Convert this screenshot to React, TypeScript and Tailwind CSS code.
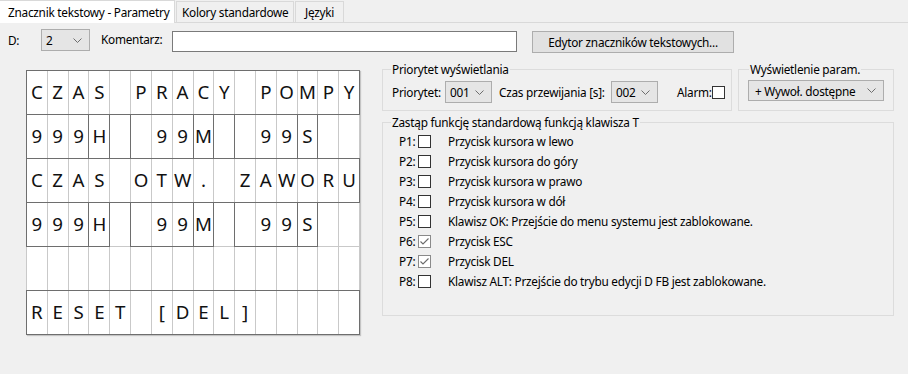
import React from "react";

const COLS = [
  "col-start-1", "col-start-2", "col-start-3", "col-start-4",
  "col-start-5", "col-start-6", "col-start-7", "col-start-8",
  "col-start-9", "col-start-10", "col-start-11", "col-start-12",
  "col-start-13", "col-start-14", "col-start-15", "col-start-16",
];

const TIME_GROUPS = [
  "col-start-1 col-span-3",
  "col-start-4 col-span-1",
  "col-start-6 col-span-3",
  "col-start-9 col-span-1",
  "col-start-11 col-span-3",
  "col-start-14 col-span-1",
];

const ROWS: { text: string; groups: string[] }[] = [
  { text: "CZAS PRACY POMPY", groups: ["col-start-1 col-span-16"] },
  { text: "999H  99M  99S  ", groups: TIME_GROUPS },
  { text: "CZAS OTW. ZAWORU", groups: ["col-start-1 col-span-16"] },
  { text: "999H  99M  99S  ", groups: TIME_GROUPS },
  { text: "                ", groups: [] },
  { text: "RESET [DEL]     ", groups: ["col-start-1 col-span-16"] },
];

const KEYS = [
  { id: "P1", label: "Przycisk kursora w lewo", checked: false },
  { id: "P2", label: "Przycisk kursora do góry", checked: false },
  { id: "P3", label: "Przycisk kursora w prawo", checked: false },
  { id: "P4", label: "Przycisk kursora w dół", checked: false },
  { id: "P5", label: "Klawisz OK: Przejście do menu systemu jest zablokowane.", checked: false },
  { id: "P6", label: "Przycisk ESC", checked: true },
  { id: "P7", label: "Przycisk DEL", checked: true },
  { id: "P8", label: "Klawisz ALT: Przejście do trybu edycji D FB jest zablokowane.", checked: false },
];

function Chevron() {
  return (
    <svg width="9" height="5" viewBox="0 0 9 5" className="shrink-0">
      <polyline points="0.5,0.5 4.5,4.5 8.5,0.5" fill="none" stroke="#6d6d6d" strokeWidth="1" />
    </svg>
  );
}

function Combo({ value, className = "" }: { value: string; className?: string }) {
  return (
    <div className={`flex items-center justify-between border border-[#adadad] bg-[#e5e5e5] pl-[4px] pr-[7px] ${className}`}>
      <span className="whitespace-nowrap">{value}</span>
      <Chevron />
    </div>
  );
}

function CheckBox({ checked = false }: { checked?: boolean }) {
  return (
    <div
      className={`flex h-[13px] w-[13px] shrink-0 items-center justify-center border bg-white ${
        checked ? "border-[#8a8a8a]" : "border-[#333333]"
      }`}
    >
      {checked && (
        <svg width="11" height="11" viewBox="0 0 11 11">
          <polyline points="1.5,5.5 4,8 9.5,2.5" fill="none" stroke="#6a6a6a" strokeWidth="1.1" />
        </svg>
      )}
    </div>
  );
}

function Tab({ label, active = false, className = "" }: { label: string; active?: boolean; className?: string }) {
  return (
    <div
      className={`flex items-center border-x border-t border-[#d9d9d9] whitespace-nowrap ${
        active ? "-mb-px h-[23px] bg-white" : "mt-px h-[21px] bg-[#f0f0f0]"
      } ${className}`}
    >
      {label}
    </div>
  );
}

function LcdGrid() {
  return (
    <div className="w-[334px] border-l border-t border-[#c9c9c9] bg-white font-['Noto_Sans',sans-serif] text-[18.7px] tracking-normal text-[#111] shadow-[1px_1px_1px_rgba(0,0,0,0.18)]">
      {ROWS.map((row, r) => (
        <div key={r} className="grid h-[44px] grid-cols-16 grid-rows-1">
          {row.text.split("").map((ch, c) => (
            <div
              key={c}
              className={`${COLS[c]} row-start-1 flex items-center justify-center border-b border-r border-[#c9c9c9] leading-none`}
            >
              {ch.trim()}
            </div>
          ))}
          {row.groups.map((g) => (
            <div key={g} className={`${g} row-start-1 -ml-px -mt-px pointer-events-none border border-[#6e6e6e]`} />
          ))}
        </div>
      ))}
    </div>
  );
}

export default function App() {
  return (
    <div className="h-[374px] w-[908px] overflow-hidden bg-[#f0f0f0] font-['Noto_Sans',sans-serif] text-[11.8px] leading-[16px] tracking-[-0.25px] text-black">
      {/* Tab strip */}
      <div className="flex h-[23px] items-start border-b border-[#d9d9d9]">
        <Tab label="Znacznik tekstowy - Parametry" active className="w-[175px] border-l-0 pl-[8px]" />
        <Tab label="Kolory standardowe" className="ml-px w-[118px] pl-[5px]" />
        <Tab label="Języki" className="ml-px w-[49px] pl-[9px]" />
      </div>

      {/* D / comment row */}
      <div className="mt-[6px] flex h-[24px] items-start pl-[8px]">
        <span className="h-[22px] w-[33px] leading-[22px]">D:</span>
        <Combo value="2" className="h-[22px] w-[49px]" />
        <span className="ml-[11px] h-[22px] w-[71px] leading-[20px]">Komentarz:</span>
        <div className="mt-[2px] h-[21px] w-[345px] border border-[#7a7a7a] bg-white" />
        <button className="ml-[15px] mt-[2px] flex h-[22px] w-[202px] items-center justify-center border border-[#adadad] bg-[#e1e1e1]">
          Edytor znaczników tekstowych...
        </button>
      </div>

      {/* Body */}
      <div className="flex items-start">
        <div className="ml-[26px] mt-[17px]">
          <LcdGrid />
        </div>

        <div className="ml-[22px] mt-[8px] w-[512px]">
          <div className="flex gap-[6px]">
            <fieldset className="w-[350px] border border-[#dcdcdc] pb-[7px] pl-[8px]">
              <legend className="px-px">Priorytet wyświetlania</legend>
              <div className="flex items-center pl-px pt-[4px]">
                <span className="w-[53px]">Priorytet:</span>
                <Combo value="001" className="h-[22px] w-[47px]" />
                <span className="ml-[7px] w-[112px]">Czas przewijania [s]:</span>
                <Combo value="002" className="h-[22px] w-[47px]" />
                <span className="ml-[19px] w-[35px]">Alarm:</span>
                <CheckBox />
              </div>
            </fieldset>
            <fieldset className="w-[156px] border border-[#dcdcdc] pb-[9px] pl-[8px]">
              <legend className="ml-[2px] px-px">Wyświetlenie param.</legend>
              <div className="ml-px pt-[3px]">
                <Combo value="+ Wywoł. dostępne" className="h-[21px] w-[136px] pl-[6px]" />
              </div>
            </fieldset>
          </div>

          <fieldset className="mt-[3px] border border-[#dcdcdc] pb-[24px] pl-[8px]">
            <legend className="px-px">Zastąp funkcję standardową funkcją klawisza T</legend>
            <div className="pl-[8px] pt-px">
              {KEYS.map((k) => (
                <div key={k.id} className="flex h-[20px] items-center">
                  <span className="w-[19px]">{k.id}:</span>
                  <CheckBox checked={k.checked} />
                  <span className="ml-[17px] whitespace-nowrap">{k.label}</span>
                </div>
              ))}
            </div>
          </fieldset>
        </div>
      </div>
    </div>
  );
}
